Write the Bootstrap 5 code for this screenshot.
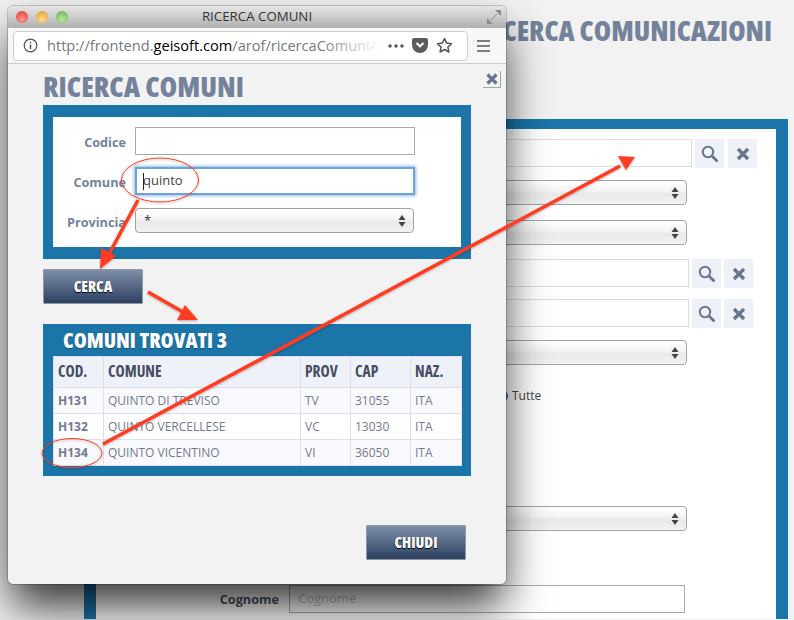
<!DOCTYPE html>
<html lang="it">
<head>
  <meta charset="UTF-8">
  <title>Ricerca Comuni</title>
  <link href="https://cdn.jsdelivr.net/npm/bootstrap@5.3.0/dist/css/bootstrap.min.css" rel="stylesheet">
  <style>
    html, body { height: 620px; overflow: hidden; }
    body { background: #f2f2f2; font-family: "Open Sans", "Liberation Sans", sans-serif; font-size: 13px; color: #74829b; }
    .cond { font-family: "Open Sans", "Liberation Sans", sans-serif; font-stretch: 75%; font-weight: 800; }
    .titolo { font-size: 28.500px; line-height: 30px; color: #74829b; margin: 0; }

    /* pagina dietro */
    .pagina { height: 620px; padding: 15px 6px 0 84px; }
    .pagina .titolo { padding-right: 16px; font-size: 28px; }
    .pannello-fondo { margin-top: 74px; border: solid #1b75a8; border-width: 10px 12px 0; background: #fff; height: 500px; padding: 10px 0 0 193px; }
    .riga { display: flex; gap: 3px; height: 29px; margin-bottom: 11px; }
    .riga-prima { margin-bottom: 12px; }
    .riga-sel { height: 25px; margin-bottom: 15px; }
    .riga-sel2 { margin-bottom: 14px; }
    .campo { height: 28px; border: 1px solid #ddd; background: #fff; }
    .w1 { width: 403px; } .w2 { width: 400px; }
    .sel-mac { appearance: none; width: 398px; height: 25px; border: 1px solid #a3a3a3; border-radius: 4px; padding: 0 22px 0 8px; font-size: 13px; color: #333;
      background: url("data:image/svg+xml,%3Csvg xmlns='http://www.w3.org/2000/svg' width='8' height='14'%3E%3Cpath d='M4 1l3.500 5h-7zM4 13l3.500-5h-7z' fill='%23444'/%3E%3C/svg%3E") no-repeat right 7px center, linear-gradient(#fff, #f3f3f3 45%, #e9e9e9 55%, #f2f2f2); }
    .quadrato { width: 29px; height: 29px; background: #eef1f8; display: flex; align-items: center; justify-content: center; flex: none; }
    .scosto { margin-left: 1px; }
    .tutte { height: 18px; margin: 22px 0 101px 207px; color: #444; font-size: 12px; line-height: 18px; display: flex; align-items: center; gap: 4px; }
    .radio-tondo { width: 12px; height: 12px; border-radius: 50%; background: #3f6da8; flex: none; }
    .sel-ultimo { margin-bottom: 54px; }
    .riga-cognome { margin: 0 0 0 -10px; display: flex; align-items: center; gap: 10px; }
    .lab-cognome { font-size: 12.700px; font-weight: 700; color: #4d5566; width: 0; flex: none; display: flex; justify-content: flex-end; white-space: nowrap; padding-top: 2px; }
    .cognome { width: 396px; height: 28px; border: 1px solid #aaa; padding: 0 8px; color: #c4c4c4; font-size: 13px; display: flex; align-items: center; }

    /* finestra */
    .finestra { position: absolute; left: 8px; top: 6px; width: 498px; height: 578px; background: #f2f2f2; border-radius: 5px; box-shadow: 0 25px 45px -3px rgba(0,0,0,.8), 0 0 0 1px rgba(0,0,0,.18); overflow: hidden; }
    .barra-tit { height: 22px; background: linear-gradient(#e6e6e6, #b0b0b0); position: relative; display: flex; align-items: center; justify-content: center; color: #333; font-size: 13.300px; }
    .semaforo { position: absolute; top: 5px; width: 12px; height: 12px; border-radius: 50%; }
    .toolbar { height: 36px; background: #f7f7f8; border-bottom: 1px solid #ccc; padding: 3px 5px; display: flex; align-items: center; gap: 9px; }
    .url { width: 455px; height: 30px; background: #fff; border: 1px solid #cfcfcf; border-radius: 4px; display: flex; align-items: center; padding: 0 0 0 9px; color: #333; }
    .url-testo { width: 333px; margin-left: 9px; font-size: 14.600px; white-space: nowrap; overflow: hidden; color: #74797f; position: relative; }
    .url-testo b { font-weight: 400; color: #000; }
    .url-testo::after { content: ""; position: absolute; right: 0; top: 0; bottom: 0; width: 60px; background: linear-gradient(90deg, rgba(255,255,255,0), #fff); }
    .corpo { padding: 0 35px; position: relative; height: 520px; }
    .corpo .titolo { padding-top: 7px; }
    .chiudi-x { position: absolute; left: 475px; top: 7px; width: 18px; height: 17px; border-right: 1px solid #9aa; border-bottom: 1px solid #9aa; display: flex; align-items: center; justify-content: center; }
    .pannello { background: #1b75a8; padding: 12px 10px; margin-top: 4px; width: 428px; }
    .bianco { background: #fff; height: 130px; padding-top: 10px; }
    .rigaf { display: flex; align-items: center; height: 28px; margin-bottom: 12px; }
    .rigaf label { width: 73px; text-align: right; font-weight: 700; font-size: 12.700px; margin-right: 9px; padding-top: 3px; color: #74829b; white-space: nowrap; }
    .inp { width: 280px; height: 28px; border: 1px solid #aaa; background: #fff; padding: 0 7px; color: #444; font-size: 13px; display: flex; align-items: center; }
    .focus-inp { border: 2px solid #6fa3d8; box-shadow: 0 0 3px 1px #8fbae6; padding: 0 6px; }
    .cursore { width: 1px; height: 17px; background: #222; margin-right: -1px; }
    .sel-prov { width: 279px; align-self: flex-start; margin-top: 1px; }
    .btn-blu { border: 1px solid #8b98a9; border-radius: 1px; background: linear-gradient(#7f8fa9, #2d4061); color: #fff; font-size: 15px; text-shadow: 0 1px 1px #000; padding: 0; display: flex; align-items: center; justify-content: center; }
    .cerca { width: 100px; height: 35px; margin-top: 10px; }
    .risultati { margin-top: 20px; height: 152px; padding: 0 10px; }
    .risultati h2 { color: #fff; font-size: 21px; line-height: 32px; margin: 0; padding-left: 10px; height: 32px; text-shadow: 0 1px 1px rgba(0,0,0,.3); }
    .tab-comuni { table-layout: fixed; width: 408px; margin: 0; --bs-table-border-color: #dcdfeb; font-size: 12px; }
    .tab-comuni th { background: #eef1f8; color: #444c60; height: 31px; padding: 0 4px; font-size: 15.500px; font-weight: 700; vertical-align: middle; }
    .tab-comuni td { height: 26px; padding: 0 4px; color: #74798f; vertical-align: middle; background: #fff; }
    .tab-comuni tbody tr:nth-child(odd) td { background: #f8f9fc; }
    .tab-comuni td:first-child { font-weight: 700; font-size: 12px; }
    .chiudi { width: 100px; height: 35px; position: absolute; left: 358px; top: 461px; }
    .frecce { position: absolute; left: 0; top: 0; width: 794px; height: 620px; pointer-events: none; }
  </style>
</head>
<body>
  <!-- pagina dietro il popup -->
  <div class="pagina">
    <div class="text-end cond titolo">RICERCA COMUNICAZIONI</div>
    <div class="pannello-fondo">
      <div class="riga riga-prima">
        <div class="campo w1"></div>
        <div class="quadrato"><svg width="20" height="20" viewBox="0 0 20 20"><circle cx="8" cy="8" r="5.200" fill="none" stroke="#68758c" stroke-width="2"/><path d="M12 12l5.500 5.500" stroke="#68758c" stroke-width="2.800"/></svg></div>
        <div class="quadrato scosto"><svg width="14" height="14" viewBox="0 0 14 14"><path d="M2 2l10 10M12 2L2 12" stroke="#68758c" stroke-width="3.400"/></svg></div>
      </div>
      <div class="riga riga-sel"><select class="sel-mac" aria-label="Tipo"><option></option></select></div>
      <div class="riga riga-sel riga-sel2"><select class="sel-mac" aria-label="Stato"><option></option></select></div>
      <div class="riga">
        <div class="campo w2"></div>
        <div class="quadrato"><svg width="20" height="20" viewBox="0 0 20 20"><circle cx="8" cy="8" r="5.200" fill="none" stroke="#68758c" stroke-width="2"/><path d="M12 12l5.500 5.500" stroke="#68758c" stroke-width="2.800"/></svg></div>
        <div class="quadrato"><svg width="14" height="14" viewBox="0 0 14 14"><path d="M2 2l10 10M12 2L2 12" stroke="#68758c" stroke-width="3.400"/></svg></div>
      </div>
      <div class="riga riga-prima">
        <div class="campo w2"></div>
        <div class="quadrato"><svg width="20" height="20" viewBox="0 0 20 20"><circle cx="8" cy="8" r="5.200" fill="none" stroke="#68758c" stroke-width="2"/><path d="M12 12l5.500 5.500" stroke="#68758c" stroke-width="2.800"/></svg></div>
        <div class="quadrato"><svg width="14" height="14" viewBox="0 0 14 14"><path d="M2 2l10 10M12 2L2 12" stroke="#68758c" stroke-width="3.400"/></svg></div>
      </div>
      <div class="riga riga-sel mb-0"><select class="sel-mac" aria-label="Anno"><option></option></select></div>
      <div class="tutte"><span class="radio-tondo"></span>Tutte</div>
      <div class="riga riga-sel sel-ultimo"><select class="sel-mac" aria-label="Ente"><option></option></select></div>
      <div class="riga-cognome">
        <div class="lab-cognome">Cognome</div>
        <div class="cognome">Cognome</div>
      </div>
    </div>
  </div>

  <!-- popup -->
  <div class="finestra">
    <div class="barra-tit">
      <span class="semaforo" style="left:8px;background:radial-gradient(circle at 50% 70%,#ff9a94,#d8342c)"></span>
      <span class="semaforo" style="left:28px;background:radial-gradient(circle at 50% 70%,#ffd98a,#d99a2a)"></span>
      <span class="semaforo" style="left:48px;background:radial-gradient(circle at 50% 70%,#b9ea96,#62a948)"></span>
      RICERCA COMUNI
      <svg class="position-absolute end-0 me-1" width="16" height="16" viewBox="0 0 16 16"><path d="M9 1h6v6zM1 9v6h6z" fill="#8c8c8c"/><path d="M11 5L5 11" stroke="#8c8c8c" stroke-width="1"/></svg>
    </div>
    <div class="toolbar">
      <div class="url">
        <svg width="15" height="15" viewBox="0 0 15 15"><circle cx="7.500" cy="7.500" r="6.300" fill="none" stroke="#555" stroke-width="1.200"/><path d="M7.500 6.500v4.500M7.500 3.800v1.500" stroke="#555" stroke-width="1.500"/></svg>
        <span class="url-testo">http://frontend.<b>geisoft.com</b>/arof/ricercaComuniA</span>
        <svg width="16" height="4" viewBox="0 0 16 4" class="ms-2"><circle cx="2" cy="2" r="1.700" fill="#555"/><circle cx="8" cy="2" r="1.700" fill="#555"/><circle cx="14" cy="2" r="1.700" fill="#555"/></svg>
        <svg width="16" height="15" viewBox="0 0 16 15" class="ms-2"><path d="M2 0h12a2 2 0 0 1 2 2v5a8 8 0 0 1-16 0V2a2 2 0 0 1 2-2z" fill="#5c5c5f"/><path d="M4.500 5l3.500 3.300L11.500 5" fill="none" stroke="#fff" stroke-width="2"/></svg>
        <svg width="17" height="17" viewBox="0 0 17 17" class="ms-2"><path d="M8.500 1.500l2.100 4.600 5 .6-3.700 3.400 1 4.900-4.400-2.500-4.400 2.500 1-4.900L1.400 6.700l5-.6z" fill="none" stroke="#555" stroke-width="1.500" stroke-linejoin="round"/></svg>
      </div>
      <svg width="13" height="12" viewBox="0 0 13 12"><path d="M0 1h13M0 6h13M0 11h13" stroke="#555" stroke-width="1.500"/></svg>
    </div>
    <div class="corpo">
      <h1 class="cond titolo">RICERCA COMUNI</h1>
      <div class="chiudi-x"><svg width="12" height="12" viewBox="0 0 12 12"><path d="M1.500 1.500l9 9M10.500 1.500l-9 9" stroke="#68758c" stroke-width="3.200"/></svg></div>
      <div class="pannello">
        <div class="bianco">
          <div class="rigaf"><label>Codice</label><div class="inp"></div></div>
          <div class="rigaf"><label>Comune</label><div class="inp focus-inp"><span class="cursore"></span>quinto</div></div>
          <div class="rigaf"><label>Provincia</label><select class="sel-mac sel-prov" aria-label="Provincia"><option>*</option></select></div>
        </div>
      </div>
      <button class="btn-blu cond cerca" type="button">CERCA</button>
      <div class="pannello risultati">
        <h2 class="cond">COMUNI TROVATI 3</h2>
        <table class="table table-bordered tab-comuni">
          <colgroup><col style="width:50px"><col style="width:197px"><col style="width:50px"><col style="width:60px"><col style="width:51px"></colgroup>
          <thead><tr><th class="cond">COD.</th><th class="cond">COMUNE</th><th class="cond">PROV</th><th class="cond">CAP</th><th class="cond">NAZ.</th></tr></thead>
          <tbody>
            <tr><td>H131</td><td>QUINTO DI TREVISO</td><td>TV</td><td>31055</td><td>ITA</td></tr>
            <tr><td>H132</td><td>QUINTO VERCELLESE</td><td>VC</td><td>13030</td><td>ITA</td></tr>
            <tr><td>H134</td><td>QUINTO VICENTINO</td><td>VI</td><td>36050</td><td>ITA</td></tr>
          </tbody>
        </table>
      </div>
      <button class="btn-blu cond chiudi" type="button">CHIUDI</button>
    </div>
  </div>

  <!-- frecce e cerchi rossi sopra lo screenshot -->
  <svg class="frecce" viewBox="0 0 794 620">
    <defs><filter id="ombra"><feDropShadow dx="0" dy="1" stdDeviation="1" flood-color="#000" flood-opacity=".3"/></filter></defs>
    <g filter="url(#ombra)" fill="#ff3b22" stroke="#ff3b22">
      <ellipse cx="160" cy="180" rx="38.500" ry="22" fill="none" stroke-width="1"/>
      <ellipse cx="72" cy="453" rx="30" ry="14.500" fill="none" stroke-width="1"/>
      <path d="M138 200L109 254" stroke-width="3.500"/>
      <path d="M100 269l1-21 15 8z" stroke="none"/>
      <path d="M148 292L183 312" stroke-width="3.500"/>
      <path d="M198 320l-21 0 8-15z" stroke="none"/>
      <path d="M103 444L620 166" stroke-width="3.500"/>
      <path d="M635 157l-17-1 8 14z" stroke="none"/>
    </g>
  </svg>
  <script src="https://cdn.jsdelivr.net/npm/bootstrap@5.3.0/dist/js/bootstrap.bundle.min.js"></script>
</body>
</html>
